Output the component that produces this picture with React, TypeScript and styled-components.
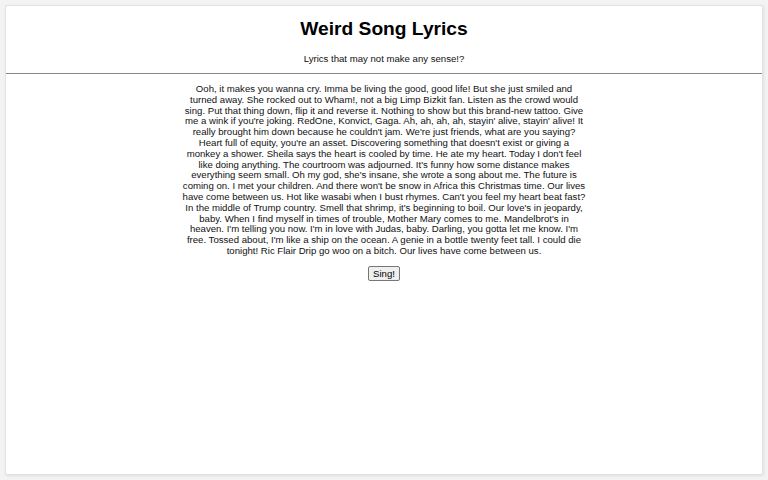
import styled, { createGlobalStyle } from "styled-components";

const lyrics =
  "Ooh, it makes you wanna cry. Imma be living the good, good life! But she just smiled and turned away. She rocked out to Wham!, not a big Limp Bizkit fan. Listen as the crowd would sing. Put that thing down, flip it and reverse it. Nothing to show but this brand-new tattoo. Give me a wink if you're joking. RedOne, Konvict, Gaga. Ah, ah, ah, ah, stayin' alive, stayin' alive! It really brought him down because he couldn't jam. We're just friends, what are you saying? Heart full of equity, you're an asset. Discovering something that doesn't exist or giving a monkey a shower. Sheila says the heart is cooled by time. He ate my heart. Today I don't feel like doing anything. The courtroom was adjourned. It's funny how some distance makes everything seem small. Oh my god, she's insane, she wrote a song about me. The future is coming on. I met your children. And there won't be snow in Africa this Christmas time. Our lives have come between us. Hot like wasabi when I bust rhymes. Can't you feel my heart beat fast? In the middle of Trump country. Smell that shrimp, it's beginning to boil. Our love's in jeopardy, baby. When I find myself in times of trouble, Mother Mary comes to me. Mandelbrot's in heaven. I'm telling you now. I'm in love with Judas, baby. Darling, you gotta let me know. I'm free. Tossed about, I'm like a ship on the ocean. A genie in a bottle twenty feet tall. I could die tonight! Ric Flair Drip go woo on a bitch. Our lives have come between us.";

const GlobalStyle = createGlobalStyle`
  html, body {
    margin: 0;
    padding: 0;
    background: #f3f3f3;
  }
  body {
    padding: 5px;
    font-family: "Liberation Sans", Arial, sans-serif;
    color: #111;
  }
`;

const Page = styled.main`
  background: #ffffff;
  min-height: calc(100vh - 10px);
  box-sizing: border-box;
  border: 1px solid #e2e2e2;
  box-shadow: 1px 1px 3px rgba(0, 0, 0, 0.08);
`;

const Header = styled.header`
  text-align: center;
  padding-top: 7px;
  border-bottom: 1px solid #8a8a8a;
`;

const Title = styled.h1`
  margin: 0;
  font-size: 19.2px;
  line-height: 32px;
  font-weight: bold;
  color: #000;
`;

const Subtitle = styled.p`
  margin: 0;
  padding: 8px 0 8px;
  font-size: 9.6px;
  line-height: 12px;
`;

const Body = styled.section`
  display: flex;
  flex-direction: column;
  align-items: center;
  padding-top: 10px;
`;

const Lyrics = styled.p`
  margin: 0;
  width: 406px;
  text-align: center;
  font-size: 9.6px;
  line-height: 10.8px;
`;

const SingButton = styled.button`
  margin-top: 9px;
  font-family: "Liberation Sans", Arial, sans-serif;
  font-size: 9.6px;
  padding: 1px 4px;
  background: #efefef;
  border: 1px solid #767676;
  border-radius: 2px;
  color: #000;
`;

export default function App() {
  return (
    <>
      <GlobalStyle />
      <Page>
        <Header>
          <Title>Weird Song Lyrics</Title>
          <Subtitle>Lyrics that may not make any sense!?</Subtitle>
        </Header>
        <Body>
          <Lyrics>{lyrics}</Lyrics>
          <SingButton>Sing!</SingButton>
        </Body>
      </Page>
    </>
  );
}
